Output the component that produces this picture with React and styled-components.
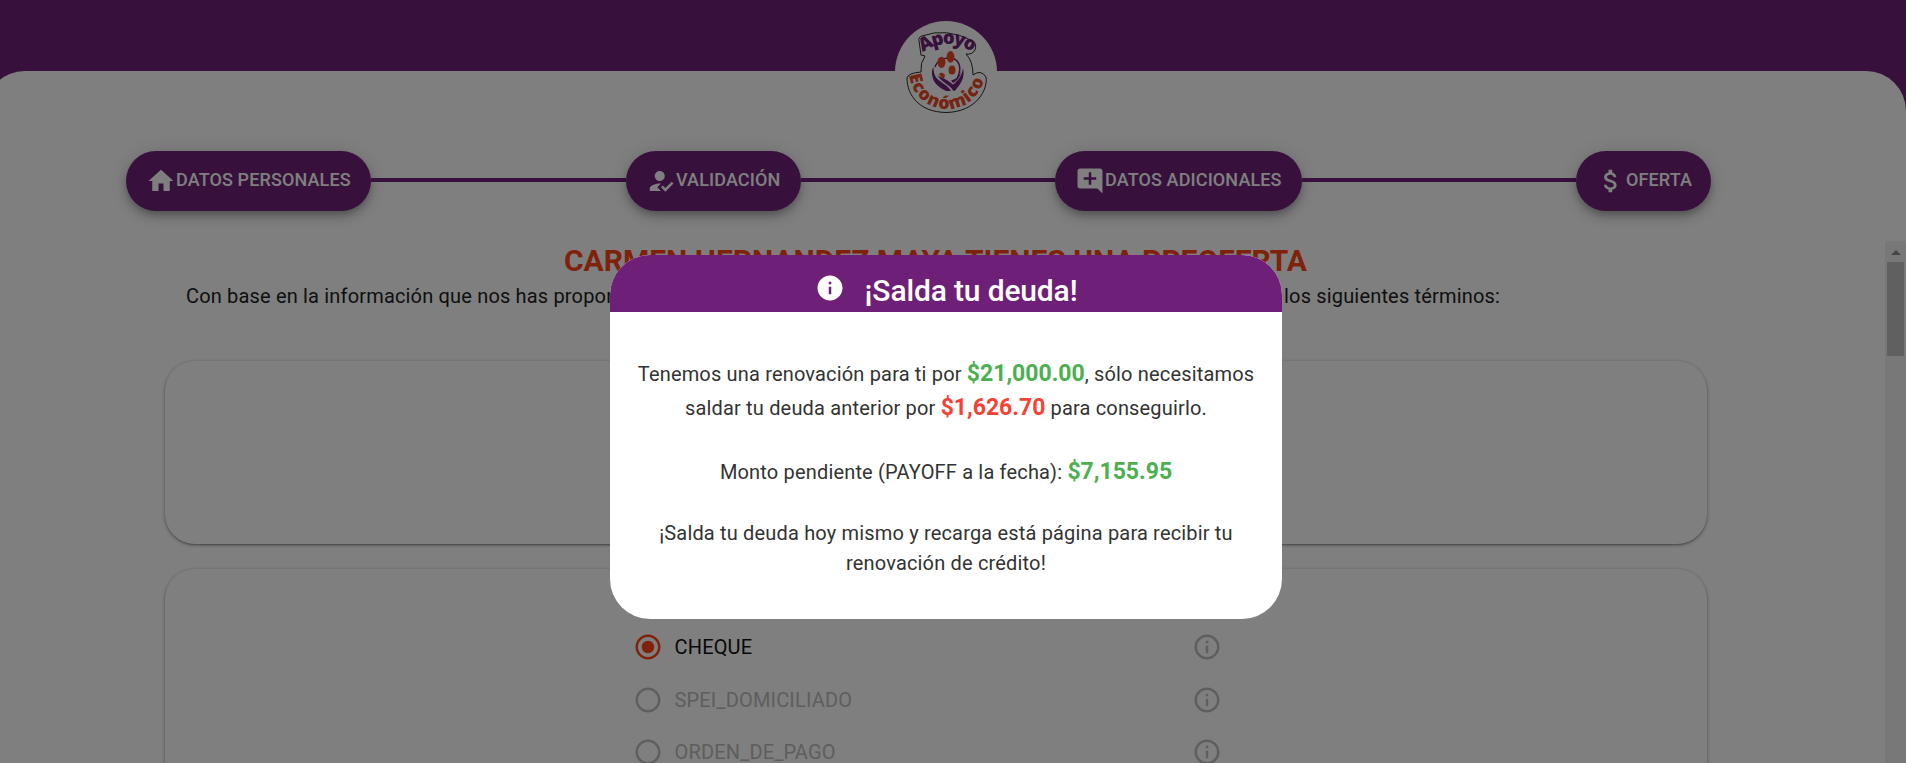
import React from 'react';
import styled, { createGlobalStyle } from 'styled-components';
import {
  MdHome, MdHowToReg, MdAddComment, MdAttachMoney, MdInfo, MdInfoOutline,
  MdRadioButtonChecked, MdRadioButtonUnchecked,
} from 'react-icons/md';

const purple = '#6e2079';
const orange = '#ff4518';

const GlobalStyle = createGlobalStyle`
  * { box-sizing: border-box; }
  body { margin: 0; overflow: hidden; font-family: Roboto, sans-serif; color: #212121; }
`;

const Page = styled.div`
  height: 763px;
  padding-top: 71px;
  background: ${purple};
  overflow: hidden;
`;
const Sheet = styled.main`
  display: flex;
  flex-direction: column;
  height: 692px;
  margin-left: -15px;
  padding-left: 15px;
  background: #fff;
  border-radius: 40px 40px 0 0;
`;
const LogoBadge = styled.div`
  position: absolute;
  top: 21px;
  left: 895px;
  width: 102px;
  height: 102px;
  border-radius: 50%;
  background: #fff;
`;
const Steps = styled.nav`
  display: flex;
  align-items: center;
  height: 60px;
  margin: 80px 0 30px 126px;
  flex-shrink: 0;
`;
const Step = styled.div`
  display: flex;
  align-items: center;
  width: ${(p) => p.$width}px;
  height: 60px;
  padding: 0 20px;
  border-radius: 30px;
  background: ${purple};
  color: #fff;
  font-size: 18px;
  font-weight: 500;
  letter-spacing: 0.12px;
  white-space: nowrap;
  box-shadow: 0 4px 6px -1px rgba(0, 0, 0, .2), 0 7px 12px rgba(0, 0, 0, .14), 0 1px 22px rgba(0, 0, 0, .12);
  svg { font-size: 30px; flex-shrink: 0; }
`;
const StepLabel = styled.span`
  padding-bottom: 3px;
`;
const StepLine = styled.div`
  width: ${(p) => p.$width}px;
  height: 4px;
  margin-bottom: 2px;
  background: ${purple};
`;
const Scroller = styled.div`
  display: flex;
  flex: 1;
  min-height: 0;
`;
const Content = styled.section`
  flex: 1;
  padding-left: 165px;
  overflow: hidden;
`;
const Title = styled.h1`
  width: 1541px;
  margin: 0;
  padding-top: 1px;
  color: ${orange};
  font-size: 30px;
  font-weight: 700;
  line-height: 38px;
  text-align: center;
  white-space: nowrap;
`;
const Intro = styled.p`
  display: flex;
  justify-content: space-between;
  width: 1314px;
  margin: 1px 0 50px 21px;
  font-size: 20px;
  line-height: 30px;
  letter-spacing: .17px;
  white-space: nowrap;
`;
const Card = styled.div`
  width: 1542px;
  height: ${(p) => p.$height}px;
  margin-bottom: 25px;
  padding-top: 52px;
  border-radius: 30px;
  background: #fff;
  box-shadow: 0 2px 2px -1px rgba(0, 0, 0, .2), 0 1px 2px rgba(0, 0, 0, .14), 0 1px 4px rgba(0, 0, 0, .28);
`;
const Option = styled.div`
  display: flex;
  align-items: center;
  width: 589px;
  height: 52.5px;
  margin-left: 468px;
  color: ${(p) => (p.$active ? '#101010' : '#bdbdbd')};
  font-size: 20px;
  letter-spacing: .17px;
  svg { font-size: 30px; color: #bdbdbd; }
  svg:first-child { color: ${(p) => (p.$active ? orange : '#bdbdbd')}; }
`;
const OptionLabel = styled.span`
  flex: 1;
  padding-left: 11.5px;
`;
const Scrollbar = styled.div`
  display: flex;
  flex-direction: column;
  align-items: center;
  width: 21px;
  background: #f1f1f1;
`;
const ScrollArrow = styled.div`
  margin: 9px 0 7px;
  border: 5px solid transparent;
  border-top: 0;
  border-bottom-color: #8c8c8c;
`;
const ScrollThumb = styled.div`
  width: 17px;
  height: 94px;
  background: #c1c1c1;
`;
const Overlay = styled.div`
  position: fixed;
  inset: 0;
  padding: 255px 0 0 610px;
  background: rgba(0, 0, 0, .5);
`;
const Dialog = styled.div`
  width: 672px;
  height: 364px;
  overflow: hidden;
  border-radius: 40px;
  background: #fff;
`;
const DialogHeader = styled.header`
  display: flex;
  align-items: center;
  justify-content: center;
  gap: 20px;
  height: 57px;
  padding-top: 10px;
  background: ${purple};
  color: #fff;
  svg { font-size: 30px; margin-bottom: 2px; }
`;
const DialogTitle = styled.h2`
  margin: 4px 0 0;
  font-size: 30px;
  font-weight: 500;
  letter-spacing: -.15px;
  line-height: 38px;
`;
const DialogBody = styled.div`
  padding-top: 45px;
  color: #333;
  font-size: 20px;
  letter-spacing: .17px;
  text-align: center;
`;
const Line = styled.p`
  height: ${(p) => p.$height}px;
  margin: 0;
  line-height: 34px;
  white-space: nowrap;
`;
const Amount = styled.strong`
  color: ${(p) => (p.$due ? '#f44336' : '#4caf50')};
  font-size: 23px;
  font-weight: 700;
  letter-spacing: 0;
`;

function Logo() {
  return (
    <svg width="102" height="102" viewBox="15 11 102 102" fontFamily="'Open Sans', sans-serif" fontWeight="800">
      <defs>
        <path id="top-arc" d="M42 43Q70 23 99 47" />
        <path id="bottom-arc" d="M29 61A38 38 0 0 0 105 61" />
      </defs>
      <path d="M39 31Q38 27 42 26Q66 17 93 31Q97 34 95 40Q92 45 86 44Q93 51 93 65Q101 59 106 67C108 79 97 102 66 102.500C39 102 27 85 27 68Q28 63 41 62Q40 53 45 46L41 45Z" fill="none" stroke="#111" strokeWidth=".9" />
      <text fill={purple} fontSize="18.500"><textPath href="#top-arc" startOffset="1" textLength="53">Apoyo</textPath></text>
      <text fill="#e84822" fontSize="17.500"><textPath href="#bottom-arc" startOffset="4" textLength="106">Económico</textPath></text>
      <path d="M55 57C57 50 65 47 73 48.500C80 51 82 59 77 69" fill="none" stroke={purple} strokeWidth="1.500" />
      <path d="M53.500 57C50.500 61 52 70 57 75C60 78 64 80 66 81H71C68 75 61 73 56.500 68C54 65 53.500 61 53.500 57Z" fill={purple} />
      <path d="M57 64C60 69 72 69 76 80L73.500 81C70 74 61 73 57 64Z" fill={purple} />
      <path d="M83 58C85 66 82 73 75.500 80L72.500 75C78 71 82 66 83 58ZM81.500 61C79 67 76 69 71 70.500L73 73C77 71 80 67 81.500 61Z" fill={purple} />
      <g fill="#e84822">
        <ellipse cx="70.500" cy="46.800" rx="3.900" ry="5.900" />
        <ellipse cx="61.500" cy="52.300" rx="4" ry="5.600" />
        <ellipse cx="72" cy="60" rx="3.500" ry="4.500" />
        <path d="M59 64Q62 61 65 65L64 69Q61 68 59 64Z" />
      </g>
    </svg>
  );
}

const steps = [
  { label: 'DATOS PERSONALES', Icon: MdHome, width: 245, line: 255 },
  { label: 'VALIDACIÓN', Icon: MdHowToReg, width: 175, line: 254 },
  { label: 'DATOS ADICIONALES', Icon: MdAddComment, width: 247, line: 274 },
  { label: 'OFERTA', Icon: MdAttachMoney, width: 135 },
];
const options = ['CHEQUE', 'SPEI_DOMICILIADO', 'ORDEN_DE_PAGO'];

export default function App() {
  return (
    <>
      <GlobalStyle />
      <Page>
        <Sheet>
          <Steps>
            {steps.map(({ label, Icon, width, line }) => (
              <React.Fragment key={label}>
                <Step $width={width}><Icon /><StepLabel>{label}</StepLabel></Step>
                {line && <StepLine $width={line} />}
              </React.Fragment>
            ))}
          </Steps>
          <Scroller>
            <Content>
              <Title>CARMEN HERNANDEZ MAYA TIENES UNA PREOFERTA</Title>
              <Intro>
                <span>Con base en la información que nos has proporcionado, te ofrecemos</span>
                <span>un crédito bajo los siguientes términos:</span>
              </Intro>
              <Card $height={183} />
              <Card $height={300}>
                {options.map((name, i) => (
                  <Option key={name} $active={i === 0}>
                    {i === 0 ? <MdRadioButtonChecked /> : <MdRadioButtonUnchecked />}
                    <OptionLabel>{name}</OptionLabel>
                    <MdInfoOutline />
                  </Option>
                ))}
              </Card>
            </Content>
            <Scrollbar><ScrollArrow /><ScrollThumb /></Scrollbar>
          </Scroller>
        </Sheet>
        <LogoBadge><Logo /></LogoBadge>
      </Page>
      <Overlay>
        <Dialog role="dialog">
          <DialogHeader><MdInfo /><DialogTitle>¡Salda tu deuda!</DialogTitle></DialogHeader>
          <DialogBody>
            <Line $height={34}>Tenemos una renovación para ti por <Amount>$21,000.00</Amount>, sólo necesitamos</Line>
            <Line $height={64}>saldar tu deuda anterior por <Amount $due>$1,626.70</Amount> para conseguirlo.</Line>
            <Line $height={61}>Monto pendiente (PAYOFF a la fecha): <Amount>$7,155.95</Amount></Line>
            <Line $height={30}>¡Salda tu deuda hoy mismo y recarga está página para recibir tu</Line>
            <Line $height={30}>renovación de crédito!</Line>
          </DialogBody>
        </Dialog>
      </Overlay>
    </>
  );
}
